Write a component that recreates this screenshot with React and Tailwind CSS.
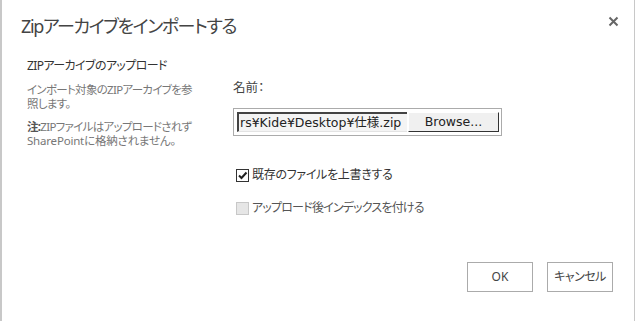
export default function App() {
  return (
    <div className="w-[635px] h-[321px] bg-white border-l-2 border-r border-[#c8c8c8] flex flex-col" style={{ fontFamily: '"Noto Sans", "Noto Sans CJK JP", sans-serif', fontFeatureSettings: '"palt"' }}>
      <div className="flex items-start justify-between pl-[19px] pr-[15px] pt-[13px]">
        <div className="text-[18px] leading-[26px] tracking-[-1.4px] text-[#444]">Zipアーカイブをインポートする</div>
        <svg width="11" height="11" viewBox="0 0 11 11" className="mt-[3px]">
          <path d="M1.5 1.5 L9.5 9.5 M9.5 1.5 L1.5 9.5" stroke="#666" strokeWidth="2" />
        </svg>
      </div>
      <div className="flex pt-[19px]">
        <div className="w-[204px] pl-[25px] shrink-0 whitespace-nowrap">
          <div className="text-[12px] leading-[16px] tracking-[-0.6px] text-[#333]">ZIPアーカイブのアップロード</div>
          <div className="mt-[9px] text-[11.5px] leading-[14px] tracking-[-0.7px] text-[#777]">インポート対象のZIPアーカイブを参<br />照します。</div>
          <div className="mt-[9px] text-[11.5px] leading-[14px] tracking-[-0.7px] text-[#777]">
            <span className="font-bold text-[#555]">注:</span>ZIPファイルはアップロードされず<br /><span className="tracking-[-0.2px]">SharePointに格納されません。</span>
          </div>
        </div>
        <div className="pl-[27px] pt-[22px]">
          <div className="text-[12.5px] leading-[16px] text-[#444]">名前：</div>
          <div className="mt-[12px] w-[269px] h-[28px] border border-[#ababab] flex items-center pl-[3px]">
            <div className="w-[170px] h-[20px] border-t-2 border-l-2 border-[#444] border-b border-r-0 border-b-[#e3e3e3] bg-[#f4f4f4] overflow-hidden whitespace-nowrap text-[12.5px] leading-[18px] text-[#222] pl-[1px]" style={{ fontFamily: '"DejaVu Sans", "Noto Sans CJK JP", sans-serif', fontFeatureSettings: 'normal' }}>rs¥Kide¥Desktop¥仕様.zip</div>
            <div className="ml-[1px] w-[91px] h-[20px] bg-[#f0f0f0] border border-[#fff] border-r-[#333] border-b-[#333] flex items-center justify-center text-[12.5px] text-[#222]" style={{ fontFamily: '"DejaVu Sans", sans-serif' }}>Browse...</div>
          </div>
          <label className="mt-[31px] ml-[3px] flex items-center gap-[3px]">
            <span className="w-[13px] h-[13px] border border-[#333] bg-white flex items-center justify-center">
              <svg width="11" height="11" viewBox="0 0 11 11"><path d="M2 5.5 L4.5 8 L9.5 2.5" stroke="#222" strokeWidth="2" fill="none" /></svg>
            </span>
            <span className="text-[12px] leading-[16px] tracking-[-0.3px] text-[#333]">既存のファイルを上書きする</span>
          </label>
          <label className="mt-[17px] ml-[3px] flex items-center gap-[3px]">
            <span className="w-[13px] h-[13px] border border-[#c8c8c8] bg-[#e6e6e6]"></span>
            <span className="text-[12px] leading-[16px] tracking-[-0.8px] text-[#555]">アップロード後インデックスを付ける</span>
          </label>
        </div>
      </div>
      <div className="mt-auto mb-[29px] flex justify-end gap-[14px] pr-[21px]">
        <div className="w-[66px] h-[30px] border border-[#ababab] flex items-center justify-center text-[12px] text-[#444]">OK</div>
        <div className="w-[66px] h-[30px] border border-[#ababab] flex items-center justify-center text-[12px] tracking-[-0.5px] text-[#444]">キャンセル</div>
      </div>
    </div>
  );
}
